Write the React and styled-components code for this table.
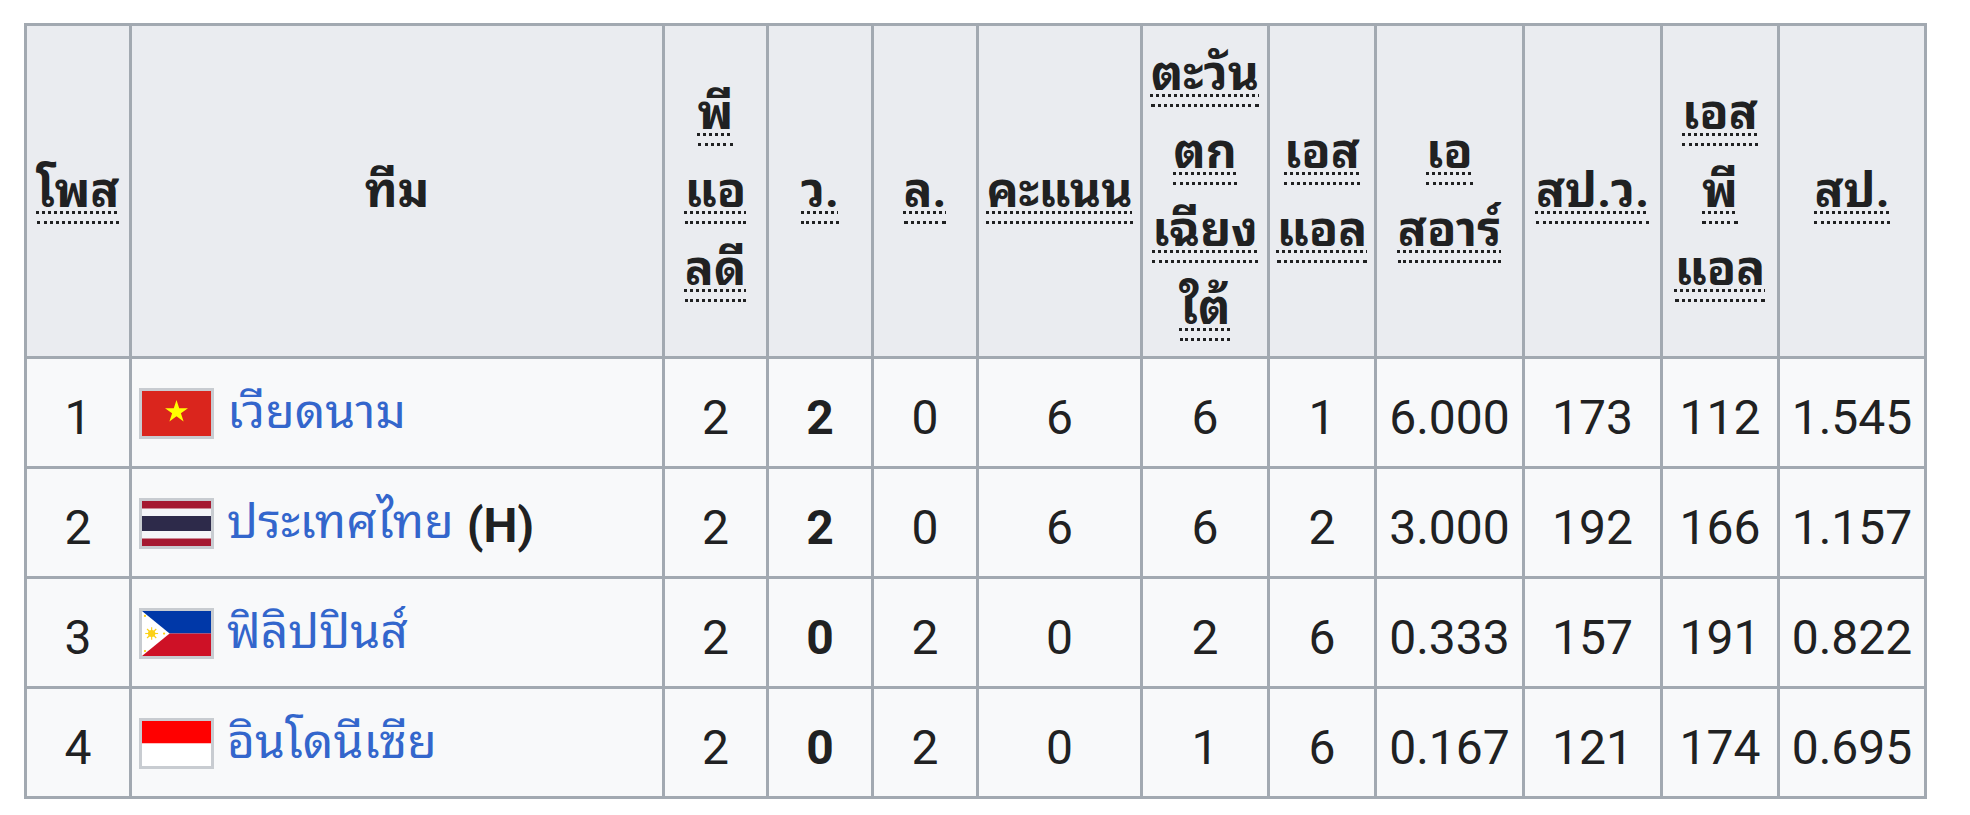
import React from "react";
import styled, { createGlobalStyle } from "styled-components";

const Global = createGlobalStyle`
  html, body { margin: 0; padding: 0; background: #ffffff; }
  body { font-family: Roboto, "Noto Sans Thai Looped", "Noto Serif Thai", "Noto Sans Thai", "Noto Sans", "DejaVu Sans", sans-serif; color: #202122; }
`;

const Page = styled.div`
  padding: 23px 24px;
`;

const Table = styled.table`
  border-collapse: collapse;
  table-layout: fixed;
  width: 1903px;
  font-size: 48px;
  background: #f8f9fa;
  border: 3px solid #a2a9b1;
`;

const Th = styled.th`
  background: #eaecf0;
  border: 3px solid #a2a9b1;
  font-weight: 700;
  text-align: center;
  vertical-align: middle;
  padding: 0 4px;
  line-height: 78px;
  height: 330px;
`;

const Abbr = styled.abbr`
  text-decoration: underline dotted;
  text-decoration-thickness: 3px;
  text-underline-offset: 4px;
  border-bottom: 3px dotted #202122;
  padding-bottom: 2px;
  cursor: help;
`;

const Line = styled.span`
  display: block;
  line-height: 78px;
`;

const Td = styled.td`
  border: 3px solid #a2a9b1;
  height: 97px;
  padding: 10px 6px 0;
  text-align: ${(p) => (p.$left ? "left" : "center")};
  vertical-align: middle;
  font-weight: ${(p) => (p.$bold ? 700 : 400)};
  white-space: nowrap;
  line-height: 1.2;
`;

const TeamCell = styled.div`
  display: flex;
  align-items: center;
  gap: 13px;
  padding-left: 1px;
`;

const FlagBox = styled.span`
  display: inline-flex;
  width: 75px;
  height: 51px;
  box-sizing: border-box;
  border: 3px solid #c8ccd1;
  flex: none;
  transform: translateY(-4px);
  svg { display: block; width: 100%; height: 100%; }
`;

const TeamLink = styled.a`
  color: #3366cc;
  text-decoration: none;
  transform: translateY(-6px);
`;

const Host = styled.b`
  color: #202122;
  font-weight: 700;
  transform: translateY(-2px);
`;

const VN = () => (
  <svg viewBox="0 0 30 20" preserveAspectRatio="none">
    <rect width="30" height="20" fill="#da251d" />
    <polygon
      fill="#ffff00"
      points="15,4 16.18,7.63 20,7.63 16.91,9.87 18.09,13.5 15,11.26 11.91,13.5 13.09,9.87 10,7.63 13.82,7.63"
    />
  </svg>
);

const TH = () => (
  <svg viewBox="0 0 30 20" preserveAspectRatio="none">
    <rect width="30" height="20" fill="#a51931" />
    <rect y="3.33" width="30" height="13.34" fill="#f4f5f8" />
    <rect y="6.67" width="30" height="6.66" fill="#2d2a4a" />
  </svg>
);

const PH = () => (
  <svg viewBox="0 0 30 20" preserveAspectRatio="none">
    <rect width="30" height="10" fill="#0038a8" />
    <rect y="10" width="30" height="10" fill="#ce1126" />
    <polygon points="0,0 12,10 0,20" fill="#ffffff" />
    <circle cx="4.2" cy="10" r="1.6" fill="#fcd116" />
    <g stroke="#fcd116" strokeWidth="0.5">
      <line x1="4.2" y1="7.2" x2="4.2" y2="12.8" />
      <line x1="1.4" y1="10" x2="7" y2="10" />
      <line x1="2.2" y1="8" x2="6.2" y2="12" />
      <line x1="2.2" y1="12" x2="6.2" y2="8" />
    </g>
    <circle cx="1.3" cy="2.2" r="0.5" fill="#fcd116" />
    <circle cx="1.3" cy="17.8" r="0.5" fill="#fcd116" />
    <circle cx="9.6" cy="10" r="0.5" fill="#fcd116" />
  </svg>
);

const ID = () => (
  <svg viewBox="0 0 30 20" preserveAspectRatio="none">
    <rect width="30" height="10" fill="#ff0000" />
    <rect y="10" width="30" height="10" fill="#ffffff" />
  </svg>
);

const widths = [105, 533, 104, 105, 105, 164, 127, 107, 148, 138, 117, 147];

const headers = [
  ["โพส"],
  null,
  ["พี", "แอ", "ลดี"],
  ["ว."],
  ["ล."],
  ["คะแนน"],
  ["ตะวัน", "ตก", "เฉียง", "ใต้"],
  ["เอส", "แอล"],
  ["เอ", "สอาร์"],
  ["สป.ว."],
  ["เอส", "พี", "แอล"],
  ["สป."],
];

const rows = [
  { pos: 1, flag: <VN />, name: "เวียดนาม", host: false, v: ["2", "2", "0", "6", "6", "1", "6.000", "173", "112", "1.545"] },
  { pos: 2, flag: <TH />, name: "ประเทศไทย", host: true, v: ["2", "2", "0", "6", "6", "2", "3.000", "192", "166", "1.157"] },
  { pos: 3, flag: <PH />, name: "ฟิลิปปินส์", host: false, v: ["2", "0", "2", "0", "2", "6", "0.333", "157", "191", "0.822"] },
  { pos: 4, flag: <ID />, name: "อินโดนีเซีย", host: false, v: ["2", "0", "2", "0", "1", "6", "0.167", "121", "174", "0.695"] },
];

export default function App() {
  return (
    <Page>
      <Global />
      <Table>
        <colgroup>
          {widths.map((w, i) => (
            <col key={i} style={{ width: w }} />
          ))}
        </colgroup>
        <thead>
          <tr>
            {headers.map((h, i) =>
              h === null ? (
                <Th key={i}>ทีม</Th>
              ) : (
                <Th key={i}>
                  {h.map((l, j) => (
                    <Line key={j}>
                      <Abbr>{l}</Abbr>
                    </Line>
                  ))}
                </Th>
              )
            )}
          </tr>
        </thead>
        <tbody>
          {rows.map((r) => (
            <tr key={r.pos}>
              <Td>{r.pos}</Td>
              <Td $left>
                <TeamCell>
                  <FlagBox>{r.flag}</FlagBox>
                  <TeamLink href="#">{r.name}</TeamLink>
                  {r.host && <Host>(H)</Host>}
                </TeamCell>
              </Td>
              {r.v.map((val, i) => (
                <Td key={i} $bold={i === 1}>
                  {val}
                </Td>
              ))}
            </tr>
          ))}
        </tbody>
      </Table>
    </Page>
  );
}
